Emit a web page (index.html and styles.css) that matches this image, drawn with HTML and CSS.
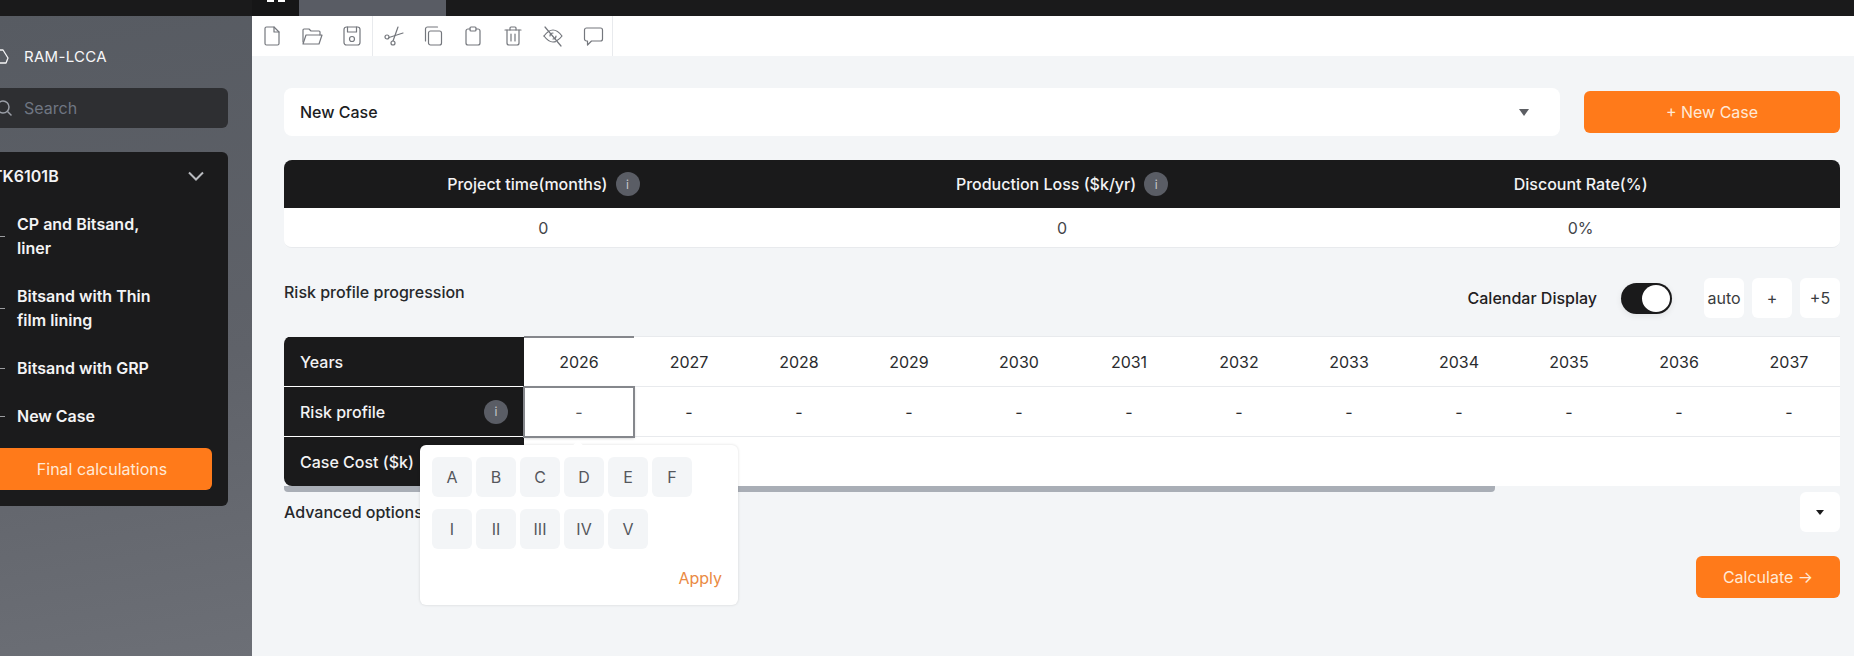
FILE: index.html
```html
<!DOCTYPE html>
<html lang="en">
<head>
<meta charset="utf-8">
<title>RAM-LCCA</title>
<link rel="stylesheet" href="styles.css">
</head>
<body>
<div class="app">
  <header class="tabbar">
    <div class="tab-spacer"></div>
    <div class="tab tab-dark"><span class="tab-pip"></span><span class="tab-pip"></span></div>
    <div class="tab tab-grey"></div>
  </header>
  <div class="body-row">
    <aside class="sidebar">
      <div class="side-inner">
        <div class="logo">
          <svg class="logo-icon" width="32" height="32" viewBox="0 0 32 32"><path d="M16 10l3 0 5 8-2 5h-6"/></svg>
          <span class="logo-text">RAM-LCCA</span>
        </div>
        <div class="search">
          <svg class="search-icon" width="18" height="18" viewBox="0 0 18 18"><circle cx="8" cy="8" r="6"/><path d="M12.500 12.500l4 4"/></svg>
          <span>Search</span>
        </div>
        <nav class="card">
          <div class="card-head">
            <span>TK6101B</span>
            <svg class="chev" width="20" height="20" viewBox="0 0 20 20"><path d="M3 6.500l7 7 7-7"/></svg>
          </div>
          <ul class="case-list">
            <li class="case"><i class="dash"></i><span class="case-name">CP and Bitsand, liner</span></li>
            <li class="case"><i class="dash"></i><span class="case-name">Bitsand with Thin film lining</span></li>
            <li class="case"><i class="dash"></i><span class="case-name">Bitsand with GRP</span></li>
            <li class="case"><i class="dash"></i><span class="case-name">New Case</span></li>
          </ul>
          <button class="btn btn-final">Final calculations</button>
        </nav>
      </div>
    </aside>
    <div class="content">
      <div class="toolbar">
        <div class="tool-group">
          <span class="tool"><svg viewBox="0 0 24 24"><path d="M6.500 3H14l5 5v11.500a1.500 1.500 0 0 1-1.500 1.500h-11A1.500 1.500 0 0 1 5 19.500V4.500A1.500 1.500 0 0 1 6.500 3z"/><path d="M14 3v5h5"/></svg></span>
          <span class="tool"><svg viewBox="0 0 24 24"><path d="M3 18V6a1 1 0 0 1 1-1h5l2 2h8a1 1 0 0 1 1 1v3"/><path d="M3 20l3-9h16l-3 9z"/></svg></span>
          <span class="tool"><svg viewBox="0 0 24 24"><rect x="4" y="3" width="16" height="18" rx="2.500"/><path d="M7.500 3v5h9V3"/><circle cx="12" cy="15" r="2.500"/></svg></span>
        </div>
        <div class="tool-group">
          <span class="tool"><svg viewBox="0 0 24 24"><circle cx="6" cy="13" r="2"/><circle cx="12" cy="19" r="2"/><path d="M12 17L17 3"/><path d="M8 13.500L22 9"/></svg></span>
          <span class="tool"><svg viewBox="0 0 24 24"><rect x="7.500" y="7" width="13" height="14" rx="2"/><path d="M4.500 17V5a2 2 0 0 1 2-2h10"/></svg></span>
          <span class="tool"><svg viewBox="0 0 24 24"><path d="M9 5H7a2 2 0 0 0-2 2v12a2 2 0 0 0 2 2h10a2 2 0 0 0 2-2V7a2 2 0 0 0-2-2h-2"/><rect x="9" y="3" width="6" height="4" rx="1"/></svg></span>
          <span class="tool"><svg viewBox="0 0 24 24"><path d="M4 6h16"/><path d="M9 6V4a1 1 0 0 1 1-1h4a1 1 0 0 1 1 1v2"/><path d="M6 6v13a2 2 0 0 0 2 2h8a2 2 0 0 0 2-2V6"/><path d="M10 10v7"/><path d="M14 10v7"/></svg></span>
          <span class="tool"><svg viewBox="0 0 24 24"><path d="M3 12c3-4 6-6 9-6s6 2 9 6c-1.500 2-3 3.500-5 4.500"/><path d="M3 12c3 4 6 6 9 6 .9 0 1.700-.1 2.500-.4"/><path d="M9 12a3 3 0 0 1 3-3M15 12a3 3 0 0 1-3 3"/><path d="M4 3l16 19"/></svg></span>
          <span class="tool"><svg viewBox="0 0 24 24"><path d="M5.500 4h14a2 2 0 0 1 2 2v9a2 2 0 0 1-2 2h-9l-4 4v-4h-1a2 2 0 0 1-2-2V6a2 2 0 0 1 2-2z"/></svg></span>
        </div>
      </div>
      <main class="main">
        <div class="case-bar">
          <div class="select"><span>New Case</span><i class="caret caret-grey"></i></div>
          <button class="btn btn-new">+ New Case</button>
        </div>
        <section class="summary">
          <div class="summary-head">
            <div class="summary-cell"><span>Project time(months)</span><i class="info">i</i></div>
            <div class="summary-cell"><span>Production Loss ($k/yr)</span><i class="info">i</i></div>
            <div class="summary-cell"><span>Discount Rate(%)</span></div>
          </div>
          <div class="summary-body">
            <div class="summary-val">0</div>
            <div class="summary-val">0</div>
            <div class="summary-val">0%</div>
          </div>
        </section>
        <div class="risk-bar">
          <h2 class="risk-title">Risk profile progression</h2>
          <div class="risk-tools">
            <span class="cal-label">Calendar Display</span>
            <span class="toggle"><i class="knob"></i></span>
            <div class="mini-row">
              <button class="mini">auto</button>
              <button class="mini">+</button>
              <button class="mini">+5</button>
            </div>
          </div>
        </div>
        <section class="risk">
          <div class="grid">
            <div class="row row-years">
              <div class="label">Years</div>
              <div class="cell cell-current">2026</div><div class="cell">2027</div><div class="cell">2028</div><div class="cell">2029</div><div class="cell">2030</div><div class="cell">2031</div><div class="cell">2032</div><div class="cell">2033</div><div class="cell">2034</div><div class="cell">2035</div><div class="cell">2036</div><div class="cell">2037</div>
            </div>
            <div class="row">
              <div class="label label-info"><span>Risk profile</span><i class="info">i</i></div>
              <div class="cell cell-active">-</div><div class="cell">-</div><div class="cell">-</div><div class="cell">-</div><div class="cell">-</div><div class="cell">-</div><div class="cell">-</div><div class="cell">-</div><div class="cell">-</div><div class="cell">-</div><div class="cell">-</div><div class="cell">-</div>
            </div>
            <div class="row row-last">
              <div class="label">Case Cost ($k)</div>
              <div class="cell-fill"></div>
            </div>
          </div>
          <div class="hscroll"></div>
          <div class="popover">
            <div class="pop-row">
              <button class="pick">A</button><button class="pick">B</button><button class="pick">C</button><button class="pick">D</button><button class="pick">E</button><button class="pick">F</button>
            </div>
            <div class="pop-row">
              <button class="pick">I</button><button class="pick">II</button><button class="pick">III</button><button class="pick">IV</button><button class="pick">V</button>
            </div>
            <div class="pop-foot"><span class="apply">Apply</span></div>
          </div>
        </section>
        <div class="advanced">
          <span class="adv-label">Advanced options</span>
          <button class="mini"><i class="caret caret-dark"></i></button>
        </div>
        <div class="actions"><button class="btn btn-calc">Calculate →</button></div>
      </main>
    </div>
  </div>
</div>
</body>
</html>
```
FILE: styles.css
```css
* { box-sizing: border-box; }
html, body { margin: 0; height: 100%; }
body { overflow: hidden; font-family: Inter, "Liberation Sans", sans-serif; font-size: 16px; color: #1c1d1f; background: #f3f5f7; }
ul { list-style: none; margin: 0; padding: 0; }
i { font-style: normal; }
button { font: inherit; border: 0; cursor: pointer; }

.app { height: 656px; display: flex; flex-direction: column; }

.tabbar { height: 16px; flex: none; display: flex; background: #1a1a1b; }
.tab-spacer { width: 252px; }
.tab { height: 16px; }
.tab-dark { width: 47px; display: flex; justify-content: center; gap: 4px; background: #161617; }
.tab-pip { width: 7px; height: 2px; background: #fff; }
.tab-grey { width: 147px; background: #595c64; }

.body-row { flex: 1; display: flex; min-height: 0; }

.sidebar { width: 252px; flex: none; overflow: hidden; background: linear-gradient(170deg, #575b62 0%, #5f6269 55%, #6c6f76 100%); }
.side-inner { width: 252px; margin-left: -24px; padding-top: 24px; }

.logo { height: 32px; display: flex; align-items: center; margin-bottom: 16px; color: #f7f7f8; margin-left: 8px; }
.logo-icon { flex: none; fill: none; stroke: #f4f4f5; stroke-width: 1.300; stroke-linejoin: round; margin-right: 8px; }
.logo-text { font-size: 15px; font-weight: 400; letter-spacing: .3px; }

.search { height: 40px; display: flex; align-items: center; gap: 11px; padding-left: 19px; border-radius: 6px; background: #2e2f32; color: #6f7682; margin-bottom: 24px; }
.search-icon { flex: none; fill: none; stroke: #9a9ea6; stroke-width: 1.500; }

.card { height: 354px; padding: 0 16px; border-radius: 6px; background: #1b1b1c; color: #f3f3f4; font-weight: 600; }
.card-head { height: 48px; display: flex; align-items: center; justify-content: space-between; padding-left: 0; padding-right: 6px; margin-bottom: 12px; }
.chev { fill: none; stroke: #b9bbbf; stroke-width: 2; }
.case-list { display: flex; flex-direction: column; gap: 24px; }
.case { display: flex; align-items: center; gap: 12px; line-height: 24px; }
.dash { width: 13px; height: 1px; flex: none; background: #9b9c9f; }
.case-name { width: 150px; }

.btn { display: block; height: 42px; border-radius: 6px; background: #ff7a1a; color: #ffe9d6; font-weight: 400; font-size: 16px; }
.btn-final { width: 220px; margin-top: 20px; }
.btn-new { width: 256px; flex: none; }
.btn-calc { width: 144px; }

.content { flex: 1; min-width: 0; display: flex; flex-direction: column; }

.toolbar { height: 40px; flex: none; display: flex; background: #fff; }
.tool-group { display: flex; border-right: 1px solid #e8eaed; }
.tool { width: 40px; display: flex; align-items: center; justify-content: center; }
.tool-group:last-child .tool:last-child { margin-right: -1px; }
.tool svg { width: 24px; height: 24px; fill: none; stroke: #74777d; stroke-width: 1.200; stroke-linejoin: round; stroke-linecap: round; }

.main { flex: 1; padding: 32px 14px 0 32px; }

.case-bar { display: flex; align-items: center; gap: 24px; }
.select { flex: 1; height: 48px; display: flex; align-items: center; justify-content: space-between; padding: 0 31px 0 16px; border-radius: 8px; background: #fff; font-weight: 500; }
.caret { display: block; width: 0; height: 0; border-left: 5px solid transparent; border-right: 5px solid transparent; border-top: 7px solid #5c5e63; }
.caret-dark { border-left-width: 4px; border-right-width: 4px; border-top: 5px solid #1a1a1b; margin: 0 auto; }

.summary { margin-top: 24px; border-radius: 8px; overflow: hidden; border-bottom: 1px solid #e8eaed; }
.summary-head { height: 48px; display: grid; grid-template-columns: repeat(3, 1fr); background: #1a1a1b; color: #f3f3f4; font-weight: 450; }
.summary-cell { display: flex; align-items: center; justify-content: center; gap: 8px; }
.info { width: 24px; height: 24px; flex: none; display: flex; align-items: center; justify-content: center; border-radius: 50%; background: #5a5d65; color: #c7c9cd; font-size: 12px; font-weight: 400; }
.summary-body { height: 39px; display: grid; grid-template-columns: repeat(3, 1fr); background: #fff; }
.summary-val { display: flex; align-items: center; justify-content: center; color: #44464a; }

.risk-bar { margin-top: 30px; height: 40px; display: flex; justify-content: space-between; }
.risk-title { margin: 3px 0 0; font-size: 16px; line-height: 22px; font-weight: 550; color: #26282b; }
.risk-tools { display: flex; align-items: center; }
.cal-label { font-weight: 550; margin-right: 24px; color: #1f2022; }
.toggle { width: 51px; height: 31px; padding: 2px; display: flex; justify-content: flex-end; border-radius: 16px; background: #1a1a1b; margin-right: 32px; box-shadow: 0 2px 6px rgba(0,0,0,.08); }
.knob { width: 28px; height: 27px; border-radius: 50%; background: #fff; }
.mini-row { display: flex; gap: 8px; }
.mini { width: 40px; height: 40px; padding: 0; border-radius: 6px; background: #fff; color: #3a3c40; font-size: 16px; }

.risk { position: relative; margin-top: 18px; }
.grid { border-radius: 8px 0 0 8px; overflow: hidden; }
.row { display: flex; height: 50px; }
.row-years { height: 51px; }
.row-last { height: 49px; }
.label { width: 240px; flex: none; display: flex; align-items: center; padding-left: 16px; background: #1a1a1b; background-clip: padding-box; border-bottom: 1px solid #fff; color: #f3f3f4; font-weight: 500; }
.row-years .label { border-top: 1px solid transparent; }
.row-last .label { border-bottom: 0; }
.label-info { justify-content: space-between; padding-right: 16px; }
.cell { width: 110px; flex: none; display: flex; align-items: center; justify-content: center; background: #fff; border-bottom: 1px solid #e8eaed; color: #2a2b2e; }
.row-years .cell { border-top: 1px solid #e8eaed; }
.row-years .cell-current { border-top: 1px solid #85878c; box-shadow: inset 0 1px 0 #85878c; }
.cell-active { position: relative; z-index: 1; outline: 2px solid #85878c; outline-offset: -1px; box-shadow: 0 1px 3px rgba(0,0,0,.25); color: #55575b; }
.cell-fill { flex: 1; background: #fff; }

.hscroll { width: 1211px; height: 6px; border-radius: 0 0 4px 4px; background: #a9aeb6; }

.popover { position: absolute; left: 136px; top: 109px; z-index: 2; width: 318px; height: 160px; padding: 12px; border-radius: 6px; background: #fff; box-shadow: 0 0 3px rgba(0,0,0,.14); }
.popover::before { content: ""; position: absolute; left: 154px; top: -3px; width: 8px; height: 8px; background: #fff; transform: rotate(45deg); }
.pop-row { display: flex; gap: 4px; margin-bottom: 12px; }
.pick { width: 40px; height: 40px; padding: 0; border-radius: 6px; background: #f3f5f7; color: #55575c; font-size: 16px; }
.pop-foot { display: flex; justify-content: flex-end; padding: 7px 4px 0 0; }
.apply { color: #ea8a43; }

.advanced { height: 40px; display: flex; align-items: center; justify-content: space-between; }
.adv-label { font-weight: 500; color: #26282b; }
.actions { display: flex; justify-content: flex-end; margin-top: 24px; }
```
